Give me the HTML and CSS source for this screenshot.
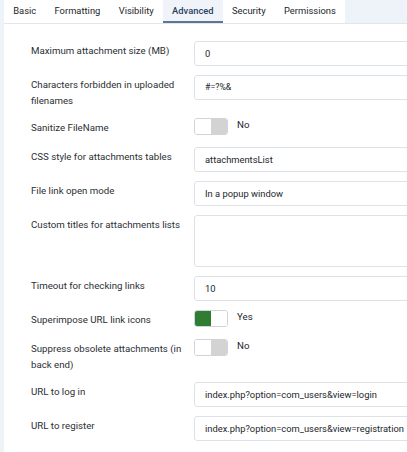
FILE: index.html
```html
<!DOCTYPE html>
<html>
<head>
<meta charset="utf-8">
<link rel="stylesheet" href="styles.css">
</head>
<body>
<div class="page">
  <div class="tabs">
    <div class="tab">Basic</div>
    <div class="tab">Formatting</div>
    <div class="tab">Visibility</div>
    <div class="tab active">Advanced</div>
    <div class="tab">Security</div>
    <div class="tab">Permissions</div>
  </div>
  <div class="panel">
    <div class="row">
      <div class="label">Maximum attachment size (MB)</div>
      <div class="input">0</div>
    </div>
    <div class="row">
      <div class="label">Characters forbidden in uploaded filenames</div>
      <div class="input small">#=?%&amp;</div>
    </div>
    <div class="row">
      <div class="label">Sanitize FileName</div>
      <div class="switch-field"><span class="switch off"><span class="half a"></span><span class="half b"></span></span><span class="switch-text">No</span></div>
    </div>
    <div class="row">
      <div class="label">CSS style for attachments tables</div>
      <div class="input">attachmentsList</div>
    </div>
    <div class="row">
      <div class="label">File link open mode</div>
      <div class="input">In a popup window</div>
    </div>
    <div class="row">
      <div class="label">Custom titles for attachments lists</div>
      <div class="textarea"></div>
    </div>
    <div class="row">
      <div class="label">Timeout for checking links</div>
      <div class="input">10</div>
    </div>
    <div class="row">
      <div class="label">Superimpose URL link icons</div>
      <div class="switch-field"><span class="switch on"><span class="half a"></span><span class="half b"></span></span><span class="switch-text">Yes</span></div>
    </div>
    <div class="row">
      <div class="label">Suppress obsolete attachments (in back end)</div>
      <div class="switch-field"><span class="switch off"><span class="half a"></span><span class="half b"></span></span><span class="switch-text">No</span></div>
    </div>
    <div class="row">
      <div class="label">URL to log in</div>
      <div class="input">index.php?option=com_users&amp;view=login</div>
    </div>
    <div class="row">
      <div class="label">URL to register</div>
      <div class="input">index.php?option=com_users&amp;view=registration</div>
    </div>
  </div>
</div>
</body>
</html>
```
FILE: styles.css
```css
html, body {
  margin: 0;
  padding: 0;
  overflow: hidden;
  background: #fff;
}
body {
  font-family: Roboto, "Liberation Sans", sans-serif;
  color: #22262a;
}
.page {
  background: #eef2f9;
  padding-left: 4px;
  height: 452px;
  overflow: hidden;
}
.tabs {
  display: flex;
  height: 23px;
  border-bottom: 1px solid #e2e6eb;
}
.tab {
  background: #fff;
  padding: 0 9.2px;
  line-height: 21px;
  font-size: 9.4px;
  color: #22262a;
}
.tab.active {
  background: #f0f4fa;
  color: #2b3f5e;
  font-weight: 500;
  box-shadow: inset 0 -2px 0 #5d7698;
}
.panel {
  background: #fff;
  padding: 17px 0 0 27px;
  height: 411px;
  overflow: hidden;
}
.row {
  display: grid;
  grid-template-columns: 163px 230px;
  margin-bottom: 9px;
}
.label {
  font-size: 9.7px;
  line-height: 16px;
  padding-top: 2px;
  padding-right: 10px;
  color: #2b2f33;
}
.input {
  box-sizing: border-box;
  height: 25px;
  border: 1px solid #dde2e8;
  border-radius: 3px;
  padding: 0 10px;
  font-size: 9.35px;
  line-height: 23px;
  color: #22262a;
  white-space: nowrap;
  overflow: hidden;
}
.input.small {
  font-size: 8.8px;
}
.textarea {
  box-sizing: border-box;
  height: 52px;
  border: 1px solid #dde2e8;
  border-radius: 3px;
}
.switch-field {
  display: flex;
  align-items: flex-start;
  min-height: 20px;
}
.switch {
  display: flex;
  box-sizing: border-box;
  width: 34px;
  height: 17px;
  border: 1px solid #cfd4da;
  border-radius: 3px;
  overflow: hidden;
}
.half {
  flex: 1;
}
.switch.off .a { background: #fff; }
.switch.off .b { background: #d3d3d3; }
.switch.on .a { background: #2e7d32; }
.switch.on .b { background: #fff; }
.switch-text {
  margin-left: 9px;
  font-size: 9.7px;
  line-height: 13px;
  color: #22262a;
}
```
